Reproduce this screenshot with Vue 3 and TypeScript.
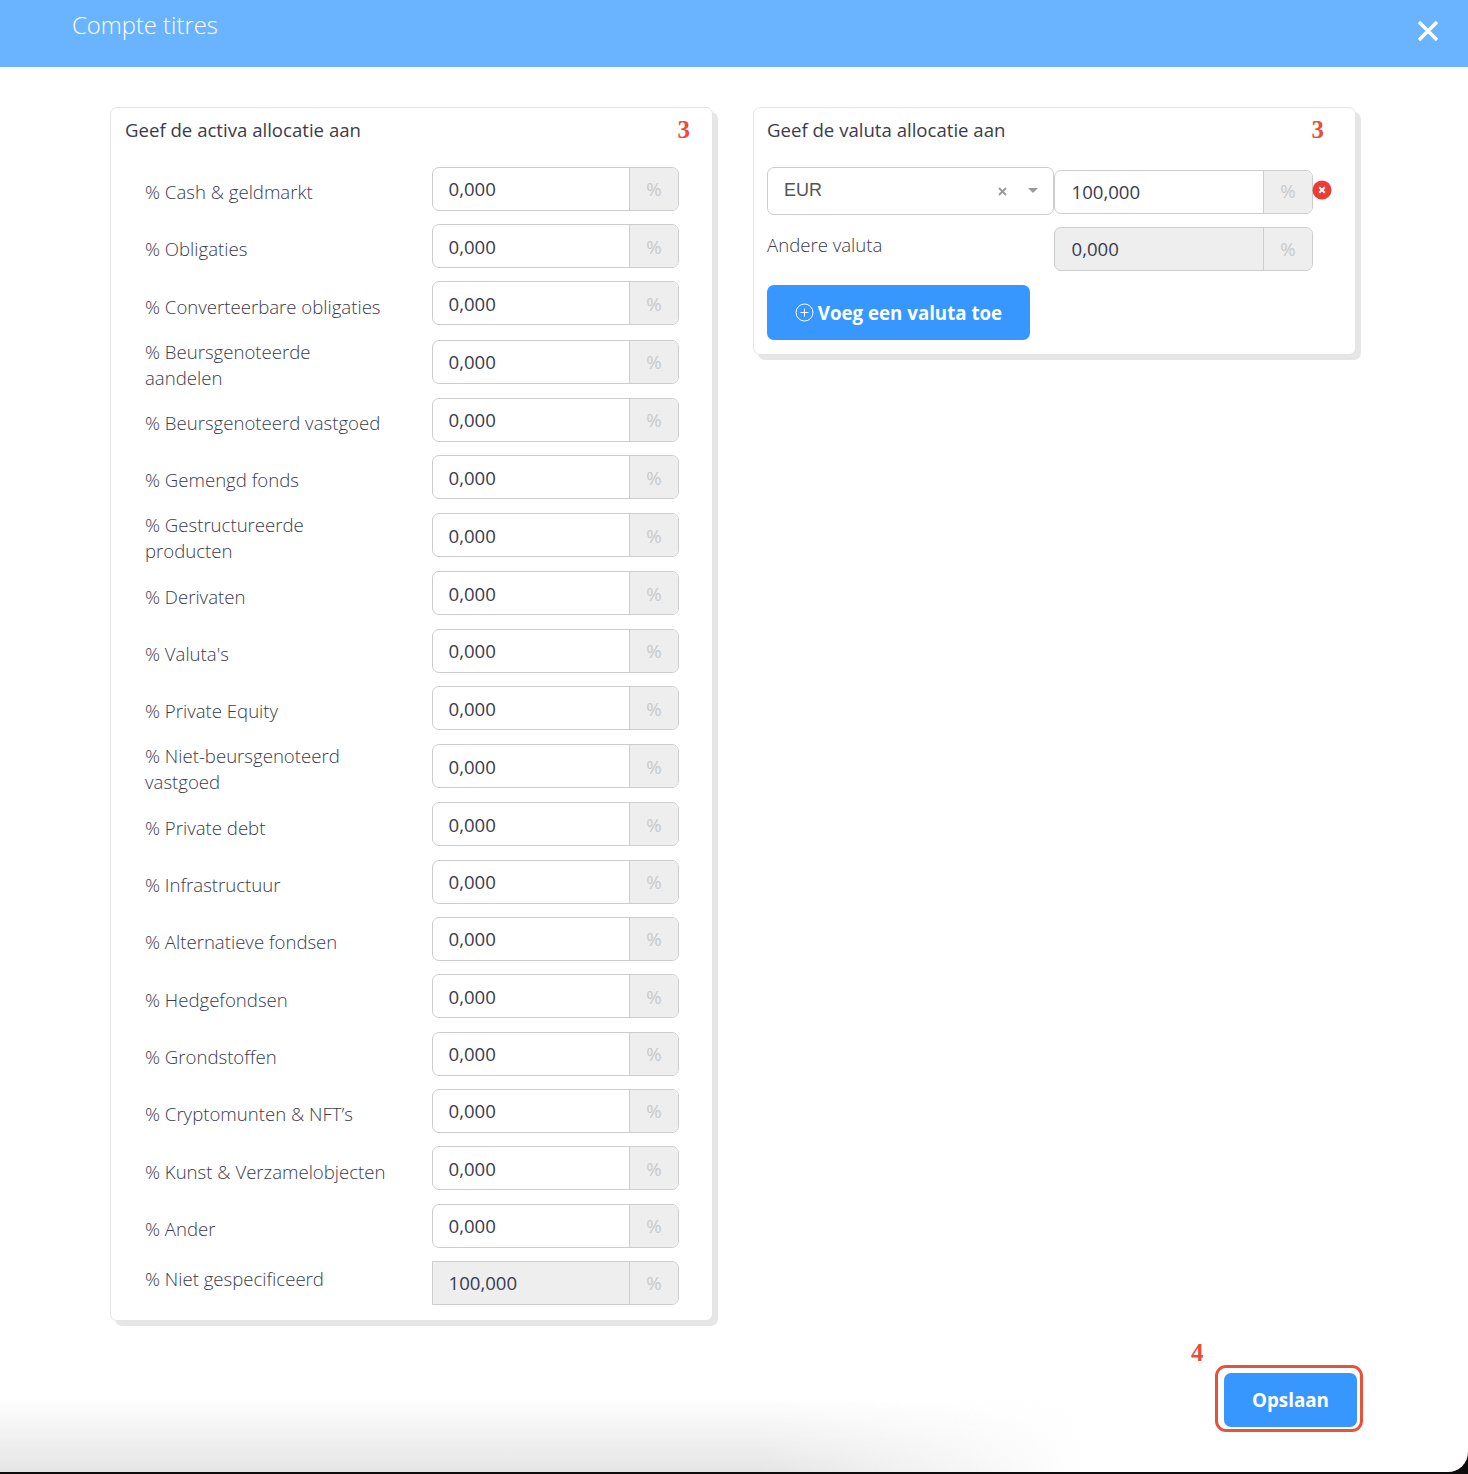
<script setup lang="ts">
interface Row { label: string; value: string; gap: number; readonly?: boolean; high?: boolean; two?: boolean; valueLow?: boolean; labelLow?: boolean }
const rows: Row[] = [
  { label: '% Cash & geldmarkt', value: '0,000', gap: 0 },
  { label: '% Obligaties', value: '0,000', gap: 13, valueLow: true },
  { label: '% Converteerbare obligaties', value: '0,000', gap: 13, valueLow: true, labelLow: true },
  { label: '% Beursgenoteerde aandelen', value: '0,000', gap: 15, two: true, labelLow: true },
  { label: '% Beursgenoteerd vastgoed', value: '0,000', gap: 14 },
  { label: '% Gemengd fonds', value: '0,000', gap: 13, valueLow: true },
  { label: '% Gestructureerde producten', value: '0,000', gap: 14, two: true, valueLow: true, labelLow: true },
  { label: '% Derivaten', value: '0,000', gap: 14, valueLow: true, labelLow: true },
  { label: "% Valuta's", value: '0,000', gap: 14 },
  { label: '% Private Equity', value: '0,000', gap: 13, valueLow: true },
  { label: '% Niet-beursgenoteerd vastgoed', value: '0,000', gap: 14, two: true, valueLow: true, labelLow: true },
  { label: '% Private debt', value: '0,000', gap: 14, valueLow: true, labelLow: true },
  { label: '% Infrastructuur', value: '0,000', gap: 14 },
  { label: '% Alternatieve fondsen', value: '0,000', gap: 13 },
  { label: '% Hedgefondsen', value: '0,000', gap: 13, valueLow: true, labelLow: true },
  { label: '% Grondstoffen', value: '0,000', gap: 14 },
  { label: '% Cryptomunten & NFT’s', value: '0,000', gap: 13 },
  { label: '% Kunst & Verzamelobjecten', value: '0,000', gap: 13, valueLow: true, labelLow: true },
  { label: '% Ander', value: '0,000', gap: 14 },
  { label: '% Niet gespecificeerd', value: '100,000', gap: 13, readonly: true, high: true },
]
</script>

<template>
  <div class="panel">
    <header class="topbar">
      <span class="title">Compte titres</span>
      <svg class="close" width="22" height="22" viewBox="0 0 22 22" aria-hidden="true">
        <path d="M2 2 L20 20 M20 2 L2 20" stroke="#fff" stroke-width="3.4" fill="none" />
      </svg>
    </header>

    <main class="content">
      <section class="card card-left">
        <h2 class="card-title">Geef de activa allocatie aan</h2>
        <span class="mark mark-a">3</span>
        <div class="rows">
          <div
            v-for="row in rows"
            :key="row.label"
            class="row"
            :style="{ marginTop: row.gap + 'px' }"
          >
            <label class="row-label" :class="{ two: row.two, high: row.high, lower: row.labelLow }">{{ row.label }}</label>
            <div class="field" :class="{ disabled: row.readonly, square: row.readonly }">
              <span class="value" :class="{ lower: row.valueLow }">{{ row.value }}</span>
              <span class="addon" :class="{ lower: row.valueLow }">%</span>
            </div>
          </div>
        </div>
      </section>

      <section class="card card-right">
        <h2 class="card-title">Geef de valuta allocatie aan</h2>
        <span class="mark mark-b">3</span>
        <div class="currency">
          <div class="select">
            <span class="select-value">EUR</span>
            <svg class="select-x" width="9" height="9" viewBox="0 0 9 9" aria-hidden="true">
              <path d="M1 1 L8 8 M8 1 L1 8" stroke="#999" stroke-width="1.8" fill="none" />
            </svg>
            <span class="caret"></span>
          </div>
          <div class="field field-wide">
            <span class="value">100,000</span>
            <span class="addon">%</span>
          </div>
          <svg class="remove" width="20" height="20" viewBox="0 0 20 20" aria-hidden="true">
            <circle cx="10" cy="10" r="9.5" fill="#ee3b33" />
            <path d="M7.2 7.2 L12.8 12.8 M12.8 7.2 L7.2 12.8" stroke="#fff" stroke-width="2" fill="none" />
          </svg>
        </div>
        <div class="other">
          <span class="other-label">Andere valuta</span>
          <div class="field field-wide disabled">
            <span class="value">0,000</span>
            <span class="addon">%</span>
          </div>
        </div>
        <button class="btn btn-add" type="button">
          <svg width="19" height="19" viewBox="0 0 19 19" aria-hidden="true">
            <circle cx="9.5" cy="9.5" r="8.5" stroke="#fff" stroke-width="1" fill="none" />
            <path d="M9.5 5.5 V13.5 M5.5 9.5 H13.5" stroke="#fff" stroke-width="1" fill="none" />
          </svg>
          <span>Voeg een valuta toe</span>
        </button>
      </section>
    </main>

    <footer class="footer">
      <span class="mark mark-c">4</span>
      <div class="highlight">
        <button class="btn btn-save" type="button">Opslaan</button>
      </div>
    </footer>
    <div class="fade"></div>
  </div>
</template>

<style>
html, body { margin: 0; background: #0d0b0b; }
</style>

<style scoped>
.panel {
  position: relative;
  width: 1468px;
  height: 1472px;
  background: #fff;
  border-bottom-right-radius: 20px;
  overflow: hidden;
  font-family: "Open Sans", "Liberation Sans", sans-serif;
  color: #3a3b4d;
  display: flex;
  flex-direction: column;
}
.topbar {
  height: 67px;
  flex: none;
  background: #6ab4ff;
  display: flex;
  justify-content: space-between;
  padding: 9px 29px 0 72px;
  box-sizing: border-box;
}
.title { color: #fff; font-size: 23.8px; font-weight: 300; line-height: 32px; }
.close { margin-top: 11px; }
.content {
  display: flex;
  align-items: flex-start;
  gap: 40px;
  padding: 40px 0 0 110px;
}
.card {
  position: relative;
  width: 603px;
  box-sizing: border-box;
  background: #fff;
  border: 1px solid #e5e5e5;
  border-radius: 7px;
  box-shadow: 5px 5px 0 #e6e6e7;
  padding: 9px 14px 0;
}
.card-left { height: 1214px; }
.card-right { height: 248px; padding-left: 13px; }
.card-title { margin: 0; font-size: 18.6px; font-weight: 400; line-height: 25px; color: #3a3b4d; }
.mark {
  position: absolute;
  font-family: "Liberation Serif", serif;
  font-weight: 700;
  font-size: 25px;
  line-height: 28px;
  color: #e74c3c;
}
.mark-a { right: 22px; top: 8px; }
.mark-b { right: 31px; top: 8px; }
.mark-c { left: -24px; top: -26px; }
.rows { margin-top: 25px; }
.row { display: flex; height: 44px; justify-content: space-between; padding-left: 20px; padding-right: 19px; }
.row-label {
  width: 245px;
  font-size: 18.6px;
  font-weight: 300;
  line-height: 26px;
  color: #3a3b4d;
  padding-top: 12px;
}
.row-label.lower { padding-top: 13px; }
.row-label.two { padding-top: 0; margin-top: -2px; }
.row-label.two.lower { margin-top: -1px; }
.row-label.high { padding-top: 5px; }
.field {
  width: 247px;
  height: 44px;
  flex: none;
  box-sizing: border-box;
  border: 1px solid #cdcdcd;
  border-radius: 7px;
  display: flex;
  overflow: hidden;
  background: #fff;
}
.field.disabled { background: #eee; }
.field.square { border-top-left-radius: 0; border-bottom-left-radius: 0; }
.field-wide { width: 259px; }
.value { flex: 1; padding-left: 15.5px; font-size: 18.6px; line-height: 42px; color: #3a3b4d; }
.field-wide .value { padding-left: 16.5px; }
.value.lower { line-height: 44px; }
.addon {
  width: 49px;
  flex: none;
  box-sizing: border-box;
  border-left: 1px solid #cdcdcd;
  background: #eee;
  color: #c9c9c9;
  text-align: center;
  font-size: 18.6px;
  line-height: 42px;
}
.addon.lower { line-height: 44px; }
.currency { position: relative; display: flex; align-items: flex-start; margin-top: 25px; height: 48px; }
.select {
  width: 287px;
  height: 48px;
  flex: none;
  box-sizing: border-box;
  border: 1px solid #cdcdcd;
  border-radius: 7px;
  display: flex;
  align-items: center;
  padding: 0 15px 2px 16px;
}
.select-value { flex: 1; font-size: 18px; color: #555; font-family: "Liberation Sans", sans-serif; }
.select-x { margin: 3px 21px 0 0; }
.caret {
  width: 0;
  height: 0;
  margin-top: 1px;
  border-left: 5px solid transparent;
  border-right: 5px solid transparent;
  border-top: 5px solid #999;
}
.currency .field { margin-top: 3px; }
.currency .addon { line-height: 40px; }
.remove { position: absolute; left: 545px; top: 13px; }
.other { display: flex; justify-content: space-between; margin-top: 12px; padding-right: 28px; }
.other-label { font-size: 18.6px; font-weight: 300; line-height: 25px; padding-top: 5px; }
.btn {
  border: 0;
  background: #3797ff;
  color: #fff;
  font-family: "Open Sans", sans-serif;
  font-weight: 700;
  font-size: 18.7px;
  border-radius: 7px;
  padding: 0;
}
.btn-add {
  width: 263px;
  height: 55px;
  margin-top: 14px;
  display: flex;
  align-items: center;
  justify-content: center;
  gap: 4px;
}
.footer {
  position: relative;
  margin: auto 105px 40px auto;
  display: flex;
}
.highlight {
  border: 3px solid #e5533d;
  border-radius: 11px;
  padding: 5px 3px 2px 6px;
  background: #fff;
}
.btn-save { display: block; width: 133px; height: 54px; font-size: 18.8px; }
.fade {
  position: absolute;
  left: 0;
  right: 0;
  bottom: 0;
  height: 75px;
  background: linear-gradient(to bottom, rgba(225, 225, 225, 0), rgba(225, 225, 225, 0.85));
  -webkit-mask-image: linear-gradient(to right, #000 0, #000 52%, transparent 74%);
  mask-image: linear-gradient(to right, #000 0, #000 52%, transparent 74%);
  pointer-events: none;
}
</style>
